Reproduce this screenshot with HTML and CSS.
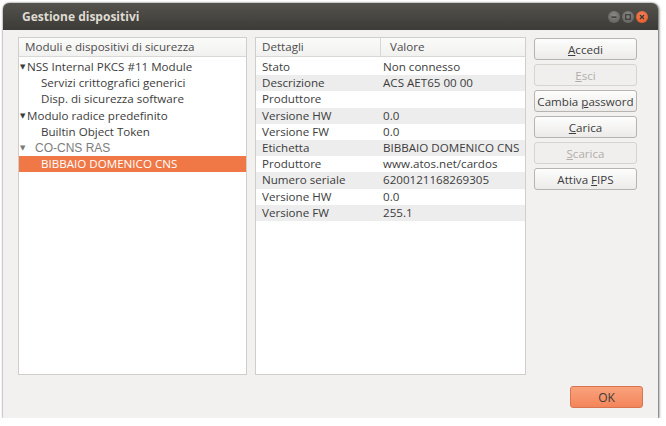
FILE: index.html
```html
<!DOCTYPE html>
<html>
<head>
<meta charset="utf-8">
<link rel="stylesheet" href="styles.css">
</head>
<body>
<div class="window">
  <div class="titlebar">
    <span class="title">Gestione dispositivi</span>
    <div class="wbtns">
      <span class="wbtn"><svg width="12" height="12" viewBox="0 0 12 12"><rect x="3.5" y="5.4" width="5" height="1.4" fill="#3c3b37"/></svg></span>
      <span class="wbtn"><svg width="12" height="12" viewBox="0 0 12 12"><rect x="3.7" y="3.7" width="4.6" height="4.6" fill="none" stroke="#3c3b37" stroke-width="1.2"/></svg></span>
      <span class="wbtn close"><svg width="12" height="12" viewBox="0 0 12 12"><path d="M4 4 L8 8 M8 4 L4 8" stroke="#3c3b37" stroke-width="1.4"/></svg></span>
    </div>
  </div>
  <div class="content">
    <div class="main">
      <div class="pane tree">
        <div class="head">Moduli e dispositivi di sicurezza</div>
        <div class="row"><span class="tri">▼</span>NSS Internal PKCS #11 Module</div>
        <div class="row child">Servizi crittografici generici</div>
        <div class="row child">Disp. di sicurezza software</div>
        <div class="row"><span class="tri">▼</span>Modulo radice predefinito</div>
        <div class="row child">Builtin Object Token</div>
        <div class="row muted"><span class="tri">▼</span><span class="mlabel">CO-CNS RAS</span></div>
        <div class="row child selected">BIBBAIO DOMENICO CNS</div>
      </div>
      <div class="pane details">
        <div class="head cols"><span class="c1">Dettagli</span><span class="c2">Valore</span></div>
        <div class="drow"><span class="c1">Stato</span><span class="c2">Non connesso</span></div>
        <div class="drow alt"><span class="c1">Descrizione</span><span class="c2">ACS AET65 00 00</span></div>
        <div class="drow"><span class="c1">Produttore</span><span class="c2"></span></div>
        <div class="drow alt"><span class="c1">Versione HW</span><span class="c2">0.0</span></div>
        <div class="drow"><span class="c1">Versione FW</span><span class="c2">0.0</span></div>
        <div class="drow alt"><span class="c1">Etichetta</span><span class="c2">BIBBAIO DOMENICO CNS</span></div>
        <div class="drow"><span class="c1">Produttore</span><span class="c2">www.atos.net/cardos</span></div>
        <div class="drow alt"><span class="c1">Numero seriale</span><span class="c2">6200121168269305</span></div>
        <div class="drow"><span class="c1">Versione HW</span><span class="c2">0.0</span></div>
        <div class="drow alt"><span class="c1">Versione FW</span><span class="c2">255.1</span></div>
      </div>
      <div class="buttons">
        <button class="btn"><u>A</u>ccedi</button>
        <button class="btn disabled"><u>E</u>sci</button>
        <button class="btn">Cambia <u>p</u>assword</button>
        <button class="btn"><u>C</u>arica</button>
        <button class="btn disabled"><u>S</u>carica</button>
        <button class="btn">Attiva <u>F</u>IPS</button>
      </div>
    </div>
    <div class="footer">
      <button class="ok">OK</button>
    </div>
  </div>
</div>
</body>
</html>
```
FILE: styles.css
```css
html, body {
  margin: 0;
  padding: 0;
  background: #ffffff;
}
body {
  font-family: "Open Sans", "DejaVu Sans", sans-serif;
  font-size: 11.6px;
  color: #3c3c3c;
}
.window {
  margin: 3px 0 0 3px;
  width: 655px;
  height: 415px;
  border-radius: 6px 6px 0 0;
  background: #f2f1f0;
  box-shadow: 1px 1px 3px rgba(0,0,0,0.55), 0 0 2px rgba(0,0,0,0.5);
  display: flex;
  flex-direction: column;
  overflow: hidden;
}
.titlebar {
  height: 27px;
  flex: none;
  background: linear-gradient(#53524d, #3c3b37);
  display: flex;
  align-items: center;
  padding: 0 10px 0 19px;
}
.title {
  flex: 1;
  color: #dfdbd2;
  font-weight: bold;
  font-size: 12px;
}
.wbtns {
  display: flex;
  gap: 2px;
  margin-top: 1px;
}
.wbtn {
  width: 12px;
  height: 12px;
  border-radius: 50%;
  background: radial-gradient(circle at 50% 35%, #8a8985, #5b5a56);
  display: flex;
}
.wbtn.close {
  background: radial-gradient(circle at 50% 35%, #f6845a, #e0501d);
}
.content {
  flex: 1;
  display: flex;
  flex-direction: column;
  padding: 7px 21px 0 15px;
}
.main {
  display: flex;
  gap: 8px;
  height: 338px;
}
.pane {
  background: #ffffff;
  border: 1px solid #cfcecb;
  box-sizing: border-box;
  height: 338px;
}
.tree { width: 229px; }
.details { width: 271px; }
.head {
  height: 19px;
  line-height: 18px;
  background: linear-gradient(#fbfbfa, #f1f1f0);
  border-bottom: 1px solid #d9d8d5;
  box-sizing: border-box;
  padding-left: 6px;
  color: #4c4c4c;
  margin-bottom: 2px;
}
.row {
  height: 16.2px;
  line-height: 16px;
  padding-left: 1px;
  white-space: nowrap;
}
.tri {
  display: inline-block;
  width: 7px;
  font-size: 7px;
  vertical-align: 2px;
  color: #3c3c3c;
}
.row.child { padding-left: 22px; }
.row.muted .tri { color: #7a7a7a; width: 15px; }
.mlabel {
  font-family: "Liberation Sans", sans-serif;
  font-size: 12px;
  color: #7d7d7d;
}
.row.selected {
  background: #f07746;
  color: #ffffff;
}
.cols {
  display: flex;
  padding-left: 0;
}
.cols .c1 {
  width: 125px;
  padding-left: 6px;
  box-sizing: border-box;
  border-right: 1px solid #d9d8d5;
}
.cols .c2 { padding-left: 9px; }
.drow {
  display: flex;
  height: 16.2px;
  line-height: 16px;
  white-space: nowrap;
}
.drow.alt { background: #ededed; }
.drow .c1 { width: 127px; padding-left: 6px; box-sizing: border-box; }
.buttons {
  width: 103px;
  display: flex;
  flex-direction: column;
  gap: 4px;
  padding-top: 1px;
}
.btn {
  height: 22px;
  font-family: inherit;
  font-size: 11.6px;
  color: #3c3c3c;
  border: 1px solid #b6b4b0;
  border-radius: 3px;
  background: linear-gradient(#fdfdfd, #ecebe9);
  padding: 0;
  white-space: nowrap;
}
.btn u { text-decoration: underline; }
.btn.disabled {
  color: #b0aeab;
  border-color: #d6d4d1;
  background: #f0efee;
}
.footer {
  display: flex;
  justify-content: flex-end;
  padding-top: 11px;
  padding-right: 0;
}
.ok {
  width: 73px;
  height: 22px;
  margin-right: -6px;
  font-family: inherit;
  font-size: 12px;
  color: #3c3c3c;
  border: 1px solid #d8744f;
  border-radius: 3px;
  background: linear-gradient(#f9a27c, #f3855a);
}
```
